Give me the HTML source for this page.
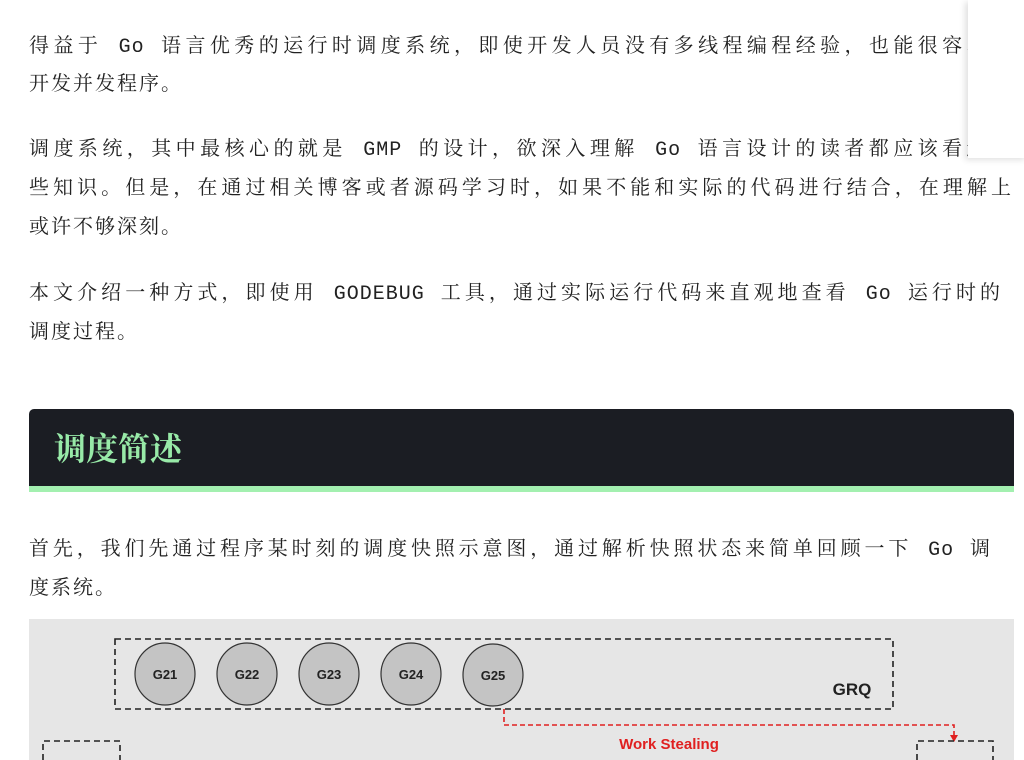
<!DOCTYPE html>
<html><head><meta charset="utf-8">
<style>
html,body{margin:0;padding:0;background:#fff;width:1024px;height:760px;overflow:hidden;position:relative}
.t{position:absolute;left:29px;width:983px;font-family:"Liberation Mono","Noto Serif CJK SC",serif;font-size:20px;color:#222;line-height:24px;white-space:nowrap;letter-spacing:2px}
.j{text-align:justify;text-align-last:justify;white-space:normal;letter-spacing:1px}
.h{position:absolute;left:29px;top:409px;width:985px;height:77px;background:#1b1d23;border-radius:5px 5px 0 0;border-bottom:6px solid #a3f0b0}
.h span{position:absolute;left:25px;top:18px;font-family:"Noto Serif CJK SC",serif;font-size:32px;font-weight:bold;color:#98eaa8;line-height:40px}
.card{position:absolute;left:968px;top:0;width:60px;height:158px;background:#fff;box-shadow:-3px 2px 6px rgba(0,0,0,.12)}
</style></head><body>
<div class="t j" style="top:36px">得益于 Go 语言优秀的运行时调度系统，即使开发人员没有多线程编程经验，也能很容易地</div>
<div class="t" style="top:74px">开发并发程序。</div>
<div class="t j" style="top:139px">调度系统，其中最核心的就是 GMP 的设计，欲深入理解 Go 语言设计的读者都应该看过这</div>
<div class="t j" style="top:178px">些知识。但是，在通过相关博客或者源码学习时，如果不能和实际的代码进行结合，在理解上</div>
<div class="t" style="top:217px">或许不够深刻。</div>
<div class="t j" style="top:283px;width:972px">本文介绍一种方式，即使用 GODEBUG 工具，通过实际运行代码来直观地查看 Go 运行时的</div>
<div class="t" style="top:322px">调度过程。</div>
<div class="h"><span>调度简述</span></div>
<div class="t j" style="top:539px;width:962px">首先，我们先通过程序某时刻的调度快照示意图，通过解析快照状态来简单回顾一下 Go 调</div>
<div class="t" style="top:578px">度系统。</div>
<svg style="position:absolute;left:29px;top:619px" width="985" height="141">
<rect x="0" y="0" width="985" height="141" fill="#e6e6e6"/>
<rect x="86" y="20" width="778" height="70" fill="none" stroke="#222" stroke-width="1.6" stroke-dasharray="6,4"/>
<g font-family="Liberation Sans,sans-serif" font-size="13" font-weight="bold" text-anchor="middle" fill="#222">
<ellipse cx="136" cy="55" rx="30" ry="31" fill="#c4c4c4" stroke="#333" stroke-width="1.2"/><text x="136" y="60">G21</text>
<ellipse cx="218" cy="55" rx="30" ry="31" fill="#c4c4c4" stroke="#333" stroke-width="1.2"/><text x="218" y="60">G22</text>
<ellipse cx="300" cy="55" rx="30" ry="31" fill="#c4c4c4" stroke="#333" stroke-width="1.2"/><text x="300" y="60">G23</text>
<ellipse cx="382" cy="55" rx="30" ry="31" fill="#c4c4c4" stroke="#333" stroke-width="1.2"/><text x="382" y="60">G24</text>
<ellipse cx="464" cy="56" rx="30" ry="31" fill="#c4c4c4" stroke="#333" stroke-width="1.2"/><text x="464" y="61">G25</text>
<text x="823" y="76" font-size="17">GRQ</text>
</g>
<path d="M475 90 V106 H925 V120" fill="none" stroke="#e02020" stroke-width="1.6" stroke-dasharray="5,3"/>
<path d="M921 116 L925 123 L929 116Z" fill="#e02020"/>
<text x="640" y="130" font-family="Liberation Sans,sans-serif" font-size="15" font-weight="bold" fill="#e02020" text-anchor="middle">Work Stealing</text>
<path d="M14 141 V122 H91 V141" fill="none" stroke="#222" stroke-width="1.6" stroke-dasharray="6,4"/>
<path d="M888 141 V122 H964 V141" fill="none" stroke="#222" stroke-width="1.6" stroke-dasharray="6,4"/>
</svg>
<div class="card"></div>
</body></html>
